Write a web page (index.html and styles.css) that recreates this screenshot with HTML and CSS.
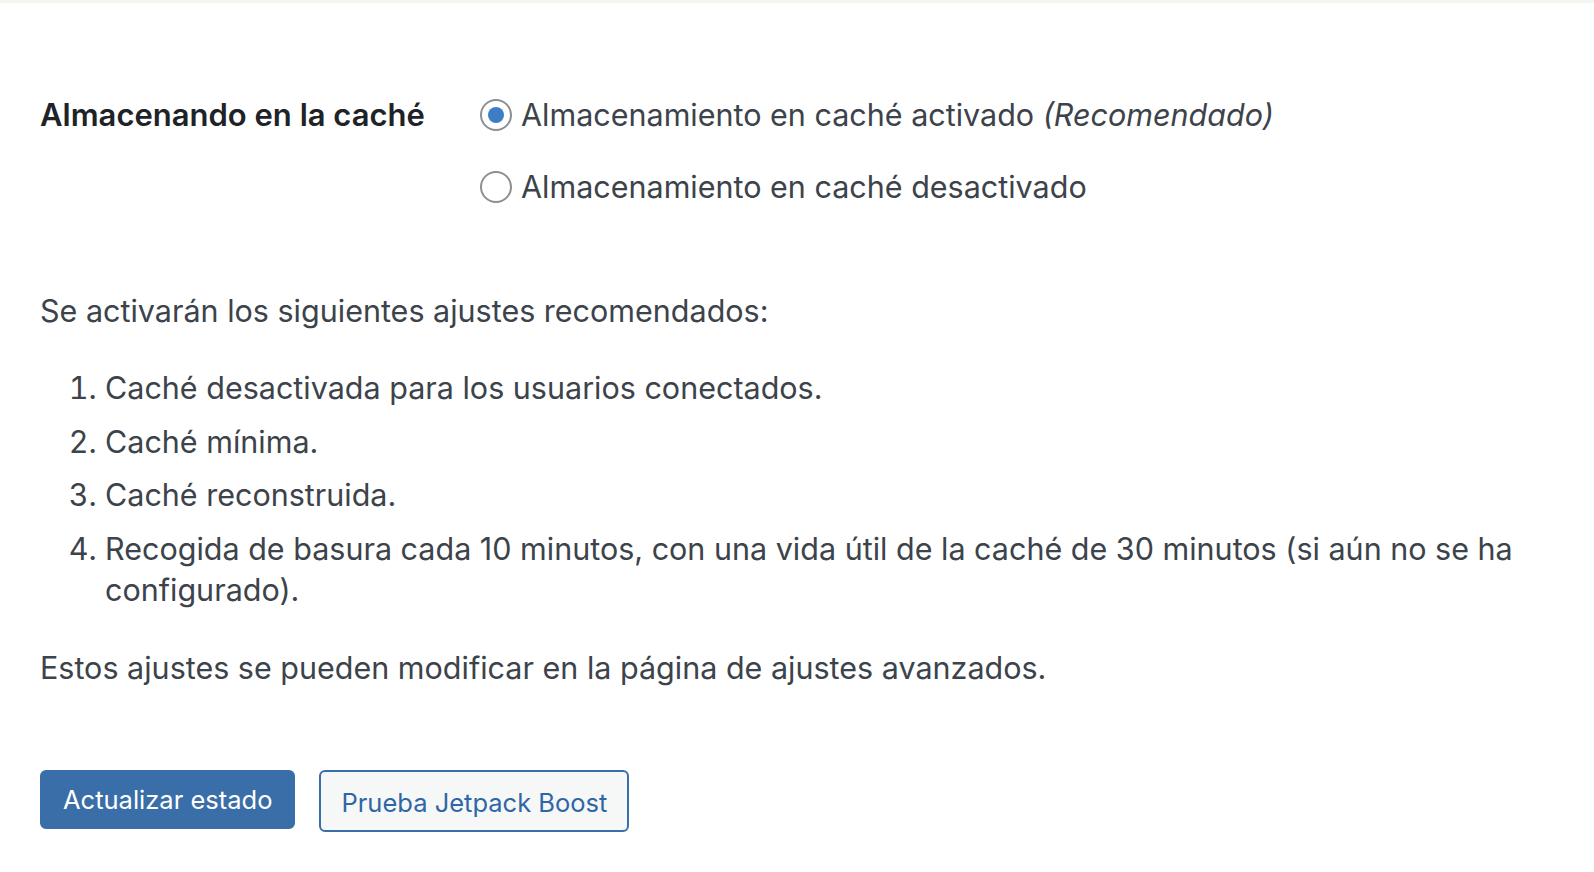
FILE: index.html
```html
<!DOCTYPE html>
<html lang="es">
<head>
<meta charset="utf-8">
<title>Almacenamiento en caché</title>
<link rel="stylesheet" href="styles.css">
</head>
<body>

<div class="topline"></div>

<div class="wrap">

<div class="form-row">
  <div class="form-label">Almacenando en la caché</div>
  <div class="form-field">
    <label class="radio-line"><span class="radio checked"></span>Almacenamiento en caché activado&nbsp;<em>(Recomendado)</em></label>
    <label class="radio-line"><span class="radio"></span>Almacenamiento en caché desactivado</label>
  </div>
</div>

<p class="intro">Se activarán los siguientes ajustes recomendados:</p>

<ol class="settings-list">
  <li>Caché desactivada para los usuarios conectados.</li>
  <li>Caché mínima.</li>
  <li>Caché reconstruida.</li>
  <li>Recogida de basura cada 10 minutos, con una vida útil de la caché de 30 minutos (si aún no se ha configurado).</li>
</ol>

<p class="note">Estos ajustes se pueden modificar en la página de ajustes avanzados.</p>

<div class="actions">
  <button class="button button-primary">Actualizar estado</button>
  <a class="button button-secondary" href="#">Prueba Jetpack Boost</a>
</div>

</div>

</body>
</html>
```

FILE: styles.css
```css
BODY {
    margin : 0;
    background : #fff;
    color : #3c434a;
    font-family : Inter, "Liberation Sans", Arial, sans-serif;
    font-size : 30.5px;
    line-height : 41px;
}

.topline {
    height : 3px;
    background : #f5f5f0;
}

.wrap {
    padding : 0 40px 0 40px;
}

/* settings row */
.form-row {
    display : flex;
    margin-top : 91px;
}
.form-label {
    width : 440px;
    flex : none;
    color : #1d2327;
    font-size : 31px;
    font-weight : 600;
}
.form-field {
    display : flex;
    flex-direction : column;
    gap : 31px;
}
.radio-line {
    display : flex;
    align-items : center;
}
.radio {
    width : 28px;
    height : 28px;
    border : 2px solid #8c8f94;
    border-radius : 50%;
    margin-right : 9px;
    display : flex;
    align-items : center;
    justify-content : center;
    background : #fff;
    flex : none;
}
.radio.checked::after {
    content : "";
    width : 16px;
    height : 16px;
    border-radius : 50%;
    background : #3d7dc6;
}

/* text */
.intro {
    margin : 83px 0 0 0;
}
.settings-list {
    margin : 36px 0 0 0;
    padding-left : 65px;
}
.settings-list LI {
    margin-bottom : 12.5px;
}
.note {
    margin : 37px 0 0 0;
}

/* buttons */
.actions {
    display : flex;
    align-items : flex-start;
    gap : 24px;
    margin-top : 82px;
}
.button {
    font-family : inherit;
    font-size : 25.5px;
    border-radius : 6px;
    box-sizing : border-box;
    display : inline-flex;
    align-items : center;
    text-decoration : none;
    cursor : pointer;
}
.button-primary {
    height : 59px;
    padding : 0 21px;
    background : #3a6ea8;
    border : 2px solid #3a6ea8;
    color : #fff;
}
.button-secondary {
    height : 62px;
    padding : 4px 20px 0 20px;
    background : #f6f7f7;
    border : 2px solid #3a6ea8;
    color : #2f66a6;
}
```
